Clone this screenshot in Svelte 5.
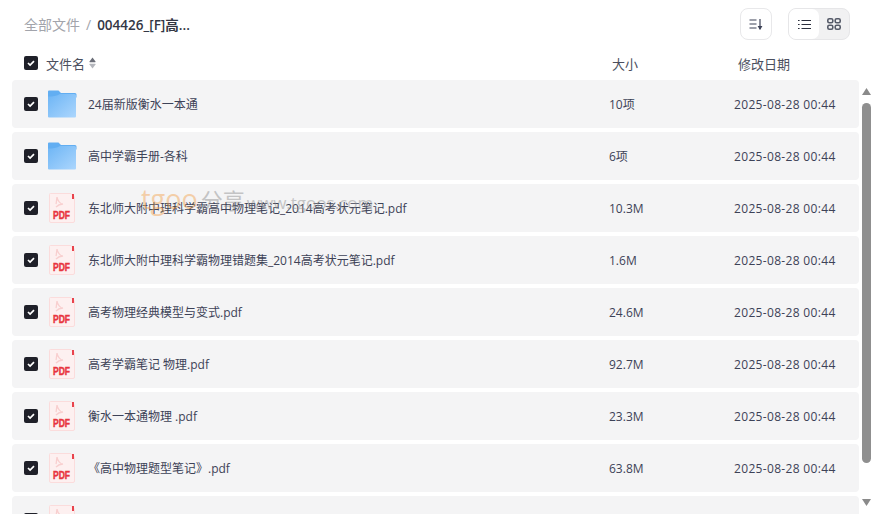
<script>
  const files = [
    { name: '24届新版衡水一本通', size: '10项', type: 'folder' },
    { name: '高中学霸手册-各科', size: '6项', type: 'folder' },
    { name: '东北师大附中理科学霸高中物理笔记_2014高考状元笔记.pdf', size: '10.3M', type: 'pdf' },
    { name: '东北师大附中理科学霸物理错题集_2014高考状元笔记.pdf', size: '1.6M', type: 'pdf' },
    { name: '高考物理经典模型与变式.pdf', size: '24.6M', type: 'pdf' },
    { name: '高考学霸笔记 物理.pdf', size: '92.7M', type: 'pdf' },
    { name: '衡水一本通物理 .pdf', size: '23.3M', type: 'pdf' },
    { name: '《高中物理题型笔记》.pdf', size: '63.8M', type: 'pdf' },
    { name: '', size: '', type: 'pdf' },
  ];
</script>

{#snippet check()}
  <span class="check">
    <svg width="14" height="14" viewBox="0 0 14 14"><path d="M4 7l2.100 2.100L10 5.200" fill="none" stroke="#fff" stroke-width="1.700" /></svg>
  </span>
{/snippet}

<div class="page">
  <header class="top">
    <div class="crumbs">
      <span class="root">全部文件</span>
      <span class="sep">/</span>
      <span class="current">004426_[F]高...</span>
    </div>
    <div class="tools">
      <button class="sort" aria-label="排序">
        <svg width="14" height="12" viewBox="0 0 14 12" fill="none" stroke="#3d4257" stroke-width="1.200">
          <path d="M0.500 2h7M0.500 6h7M0.500 10h7" />
          <path d="M11 1v9.500" />
          <path d="M9.600 8.500L11 11l1.400-2.500z" fill="#3d4257" />
        </svg>
      </button>
      <div class="toggle">
        <button class="active" aria-label="列表">
          <svg width="13" height="11" viewBox="0 0 13 11" fill="none" stroke="#2b2f3d" stroke-width="1.200">
            <path d="M0 1.500h1.600M0 5.500h1.600M0 9.500h1.600M3.500 1.500H13M3.500 5.500H13M3.500 9.500H13" />
          </svg>
        </button>
        <button aria-label="网格">
          <svg width="14" height="12" viewBox="0 0 14 12" fill="none" stroke="#555a68" stroke-width="1.600">
            <rect x="0.800" y="0.800" width="5" height="4" rx="1.500" />
            <rect x="8.200" y="0.800" width="5" height="4" rx="1.500" />
            <rect x="0.800" y="7.200" width="5" height="4" rx="1.500" />
            <rect x="8.200" y="7.200" width="5" height="4" rx="1.500" />
          </svg>
        </button>
      </div>
    </div>
  </header>

  <div class="heads">
    <div class="head-name">
      {@render check()}
      <span>文件名</span>
      <svg class="sorter" width="7" height="12" viewBox="0 0 7 12">
        <path d="M3.500 0.500L6.500 4.500Q7 5.200 6 5.200H1Q0 5.200 .5 4.500z" fill="#6b6e78" />
        <path d="M3.500 11.500L.5 7.500Q0 6.800 1 6.800H6Q7 6.800 6.500 7.500z" fill="#b4b6bc" />
      </svg>
    </div>
    <span class="head-size">大小</span>
    <span class="head-date">修改日期</span>
  </div>

  <div class="body">
    <div class="list">
      {#each files as file}
        <div class="row">
          {@render check()}
          <span class="icon">
            {#if file.type === 'folder'}
              <svg width="30" height="28" viewBox="0 0 30 28">
                <defs>
                  <linearGradient id="fold" x1="0" y1="0" x2="1" y2="1">
                    <stop offset="0" stop-color="#6db5f5" />
                    <stop offset="1" stop-color="#acd6fd" />
                  </linearGradient>
                </defs>
                <path d="M1 1.500a1 1 0 0 1 1-1h9.500l2.500 2.500h14a1.500 1.500 0 0 1 1.500 1.500v3H1z" fill="#62aef2" />
                <path d="M1 6.500c5 0 9-.5 12-2.500h14.500a1.500 1.500 0 0 1 1.500 1.500V26.500a1 1 0 0 1-1 1H2a1 1 0 0 1-1-1z" fill="url(#fold)" />
              </svg>
            {:else}
              <svg width="26" height="30" viewBox="0 0 26 30">
                <path d="M1.500 .5h20.500L25.500 4V28a1.500 1.500 0 0 1-1.500 1.500H2A1.500 1.500 0 0 1 .5 28V1.500a1 1 0 0 1 1-1z" fill="#fdf0f0" stroke="#fbdcdc" />
                <rect x="23" y="1" width="2" height="5" fill="#e8434d" />
                <path d="M8 4c.5 3 2 6 6 7.500M14 11c-3 0-5 1-7 3M8 4c-.5 3-.5 5-1 7" fill="none" stroke="#f8cfcf" stroke-width="1.300" />
                <text x="4" y="26" textLength="17" lengthAdjust="spacingAndGlyphs" class="pdf">PDF</text>
              </svg>
            {/if}
          </span>
          <span class="name">{file.name}</span>
          <span class="size">{file.size}</span>
          <span class="date">{file.name ? '2025-08-28 00:44' : ''}</span>
        </div>
      {/each}
    </div>
    <div class="bar">
      <svg width="9" height="7" viewBox="0 0 9 7"><path d="M4.500 0l4.500 7H0z" fill="#8a8a8a" /></svg>
      <div class="thumb"></div>
      <svg width="9" height="7" viewBox="0 0 9 7"><path d="M4.500 7L0 0h9z" fill="#8a8a8a" /></svg>
    </div>
    <div class="mark"><span class="t1">tgoo</span><span class="t2">分享</span><span class="t3">www.tgoos.com</span></div>
  </div>
</div>

<style>
  :global(body) {
    margin: 0;
    background: #fff;
  }
  .page {
    width: 874px;
    height: 514px;
    overflow: hidden;
    font-family: "Open Sans", "Noto Sans CJK SC", sans-serif;
    color: #3d4257;
    font-size: 12px;
  }
  .top {
    display: flex;
    justify-content: space-between;
    align-items: center;
    height: 32px;
    padding: 8px 24px 0;
  }
  .crumbs {
    display: flex;
    align-items: center;
    gap: 6px;
    font-size: 14px;
  }
  .root { color: #a2a4ab; }
  .sep { color: #a2a4ab; }
  .current { color: #333745; font-weight: 600; font-size: 13.5px; }
  .tools {
    display: flex;
    gap: 16px;
  }
  button {
    border: none;
    background: none;
    padding: 0;
    display: flex;
    align-items: center;
    justify-content: center;
  }
  .sort {
    width: 32px;
    height: 32px;
    box-sizing: border-box;
    border: 1px solid #e8e8ea;
    border-radius: 8px;
  }
  .toggle {
    display: flex;
    width: 62px;
    height: 32px;
    box-sizing: border-box;
    background: #f1f1f2;
    border: 1px solid #e6e6e8;
    border-radius: 8px;
  }
  .toggle button { width: 30px; }
  .toggle button.active {
    background: #fff;
    border-radius: 7px;
  }
  .heads {
    display: flex;
    align-items: center;
    height: 30px;
    margin-top: 8px;
    margin-bottom: 2px;
    padding-left: 24px;
    font-size: 13px;
    color: #4b4f5e;
  }
  .head-name {
    display: flex;
    align-items: center;
    gap: 8px;
    width: 588px;
  }
  .sorter { margin-left: -4px; }
  .head-size { width: 126px; }
  .check {
    display: flex;
    flex: none;
    width: 14px;
    height: 14px;
    border-radius: 2px;
    background: #1f2029;
  }
  .body {
    position: relative;
    display: flex;
    height: 434px;
    padding-left: 12px;
  }
  .list {
    display: flex;
    flex-direction: column;
    gap: 4px;
    width: 847px;
  }
  .row {
    display: flex;
    flex: none;
    align-items: center;
    height: 48px;
    padding-left: 12px;
    border-radius: 4px;
    background: #f4f4f5;
    box-sizing: border-box;
  }
  .icon {
    display: flex;
    justify-content: center;
    flex: none;
    width: 30px;
    margin-left: 9px;
    margin-right: 11px;
  }
  .pdf {
    font-family: "Liberation Sans", sans-serif;
    font-weight: 700;
    font-size: 11px;
    fill: #e8343e;
    stroke: #e8343e;
    stroke-width: 0.45px;
  }
  .name { width: 521px; }
  .size { width: 125px; }
  .date { letter-spacing: 0.33px; }
  .bar {
    display: flex;
    flex-direction: column;
    align-items: center;
    width: 9px;
    margin-left: 3px;
    padding-top: 8px;
  }
  .thumb {
    width: 9px;
    height: 360px;
    margin: 8px 0 36px;
    border-radius: 5px;
    background: #8f8f8f;
  }
  .mark {
    position: absolute;
    left: 141px;
    top: 100px;
    display: flex;
    align-items: baseline;
    opacity: 0.45;
    pointer-events: none;
    color: #8a8a8a;
    white-space: nowrap;
  }
  .t1 { font-size: 27px; color: #f3a24c; margin-right: 3px; }
  .t2 { font-size: 22px; }
  .t3 { font-size: 17px; margin-left: 2px; }
</style>
